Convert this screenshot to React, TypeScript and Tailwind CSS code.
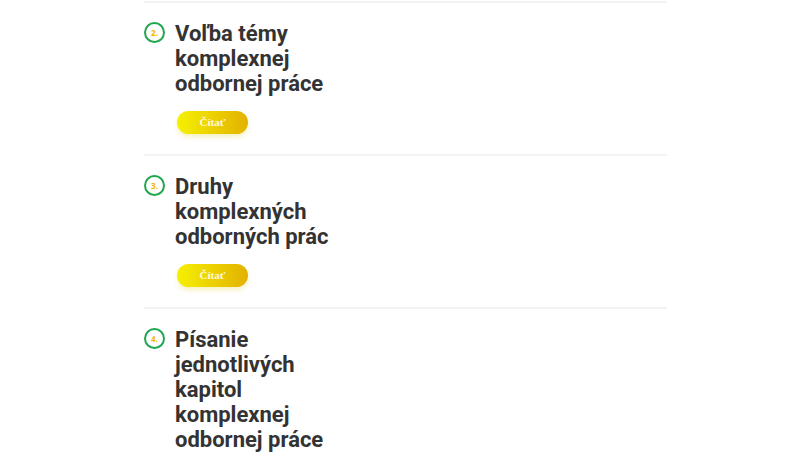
import React from "react";

const items = [
  { n: "2.", title: "Voľba témy komplexnej odbornej práce", button: true },
  { n: "3.", title: "Druhy komplexných odborných prác", button: true },
  { n: "4.", title: "Písanie jednotlivých kapitol komplexnej odbornej práce", button: false },
];

export default function App() {
  return (
    <div className="w-[800px] h-[465px] overflow-hidden bg-white pl-[144px] pt-px">
      <div className="w-[523px]">
        {items.map((it) => (
          <div key={it.n} className="border-t-2 border-[#f3f3f3] pt-[18px] pb-[20px]">
            <div className="flex items-start gap-[10px]">
              <div className="mt-[1px] flex h-[21px] w-[21px] shrink-0 items-center justify-center rounded-full border-2 border-[#1fa64f]">
                <span
                  className="text-[8px] font-bold leading-none text-[#f0b400]"
                  style={{ fontFamily: '"Noto Sans", sans-serif' }}
                >
                  {it.n}
                </span>
              </div>
              <div className="flex flex-col">
                <h2
                  className="w-[160px] text-[22px] font-bold leading-[25px] text-[#333333]"
                  style={{ fontFamily: 'Roboto, sans-serif' }}
                >
                  {it.title}
                </h2>
                {it.button && (
                  <button
                    className="ml-[2px] mt-[15px] flex h-[23px] w-[71px] items-center justify-center rounded-full bg-gradient-to-r from-[#f5f000] to-[#e2b200] text-[11px] font-bold text-[#fffbe0] shadow-[0_3px_5px_rgba(220,200,0,0.25)]"
                    style={{ fontFamily: '"Liberation Serif", serif' }}
                  >
                    Čítať
                  </button>
                )}
              </div>
            </div>
          </div>
        ))}
      </div>
    </div>
  );
}
